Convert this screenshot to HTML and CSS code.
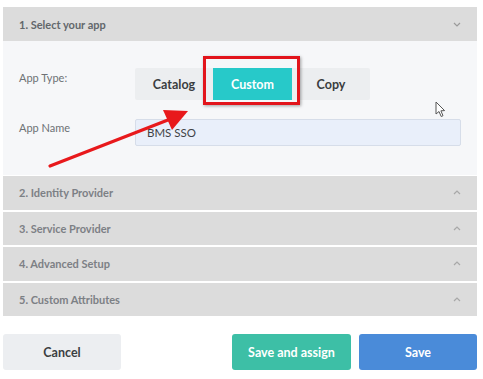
FILE: index.html
```html
<!DOCTYPE html>
<html lang="en">
<head>
    <meta charset="UTF-8">
    <meta name="viewport" content="width=device-width, initial-scale=1.0">
    <title>New App</title>
    <link rel="stylesheet" href="styles.css">
</head>
<body>
    <div class="page">
        <section class="panel">
            <div class="panel-header">
                <span>1. Select your app</span>
                <svg class="chevron" width="8" height="5" viewBox="0 0 8 5"><path d="M1 1 L4 4 L7 1" fill="none" stroke="#9a9a9a" stroke-width="1.2"/></svg>
            </div>
            <div class="panel-body">
                <div class="form-row">
                    <label class="form-label">App Type:</label>
                    <div class="segmented">
                        <button class="segment">Catalog</button>
                        <button class="segment active">Custom<span class="highlight"></span></button>
                        <button class="segment">Copy</button>
                    </div>
                </div>
                <div class="form-row row-name">
                    <label class="form-label">App Name</label>
                    <input class="text-input" type="text" value="BMS SSO">
                </div>
            </div>
        </section>

        <section class="panel collapsed">
            <div class="panel-header">
                <span>2. Identity Provider</span>
                <svg class="chevron" width="8" height="5" viewBox="0 0 8 5"><path d="M1 4 L4 1 L7 4" fill="none" stroke="#a8a8a8" stroke-width="1.2"/></svg>
            </div>
        </section>
        <section class="panel collapsed">
            <div class="panel-header">
                <span>3. Service Provider</span>
                <svg class="chevron" width="8" height="5" viewBox="0 0 8 5"><path d="M1 4 L4 1 L7 4" fill="none" stroke="#a8a8a8" stroke-width="1.2"/></svg>
            </div>
        </section>
        <section class="panel collapsed">
            <div class="panel-header">
                <span>4. Advanced Setup</span>
                <svg class="chevron" width="8" height="5" viewBox="0 0 8 5"><path d="M1 4 L4 1 L7 4" fill="none" stroke="#a8a8a8" stroke-width="1.2"/></svg>
            </div>
        </section>
        <section class="panel collapsed">
            <div class="panel-header">
                <span>5. Custom Attributes</span>
                <svg class="chevron" width="8" height="5" viewBox="0 0 8 5"><path d="M1 4 L4 1 L7 4" fill="none" stroke="#a8a8a8" stroke-width="1.2"/></svg>
            </div>
        </section>

        <footer class="actions">
            <button class="btn btn-cancel">Cancel</button>
            <div class="actions-right">
                <button class="btn btn-assign">Save and assign</button>
                <button class="btn btn-save">Save</button>
            </div>
        </footer>
    </div>

    <!-- annotation arrow -->
    <svg class="annotation-arrow" width="150" height="62" viewBox="0 0 150 62">
        <line x1="3" y1="59" x2="126" y2="11" stroke="#e8191c" stroke-width="3.2" stroke-linecap="round"/>
        <polygon points="141,4 116,3 125,23" fill="#e8191c"/>
    </svg>

    <!-- mouse pointer -->
    <svg class="cursor" width="11" height="17" viewBox="0 0 11 17">
        <path d="M1 1 L1 13 L4 10.5 L6.2 15.5 L8 14.7 L5.9 9.8 L9.6 9.6 Z" fill="#fff" stroke="#555" stroke-width="1" stroke-linejoin="round"/>
    </svg>
</body>
</html>
```

FILE: styles.css
```css
* {
    margin: 0;
    padding: 0;
    box-sizing: border-box;
    font-family: Lato, "Open Sans", sans-serif;
}

body {
    background-color: white;
    color: #444;
}

.page {
    width: 474px;
    margin-left: 3px;
    padding-top: 7px;
    display: flex;
    flex-direction: column;
    gap: 2px;
}

.panel-header {
    display: flex;
    justify-content: space-between;
    align-items: center;
    height: 34px;
    padding: 0 16px 0 16px;
    background-color: #dcdcdc;
    color: #6b6f73;
    font-size: 11px;
    font-weight: bold;
}

.panel.collapsed .panel-header {
    height: 33.5px;
    color: #7c8085;
}

.panel:first-child .panel-header {
    color: #62676b;
}

.panel-body {
    background-color: #f6f7f9;
    height: 134px;
    padding: 27px 16px 0 16px;
    margin-bottom: -1px;
}

.form-row {
    display: flex;
    align-items: flex-start;
}

.row-name {
    margin-top: 19px;
}

.form-label {
    width: 116px;
    padding-top: 3px;
    font-size: 11px;
    color: #6d7175;
}

.row-name .form-label {
    padding-top: 2px;
}

.segmented {
    display: flex;
    background-color: #eceef0;
    border-radius: 2px;
}

.segment {
    position: relative;
    width: 78px;
    height: 32px;
    border: none;
    background: transparent;
    font-size: 12.5px;
    font-weight: bold;
    color: #3a3d40;
}

.segment.active {
    width: 79px;
    background-color: #27c9c9;
    color: white;
}

.highlight {
    position: absolute;
    left: -10px;
    top: -12px;
    width: 97px;
    height: 49px;
    border: 3px solid #e2141b;
    box-shadow: 1px 1px 3px rgba(0, 0, 0, 0.35);
}

.text-input {
    width: 326px;
    height: 27px;
    padding: 0 11px;
    border: 1px solid #d6dde9;
    border-radius: 2px;
    background-color: #e9effa;
    font-size: 11.5px;
    color: #3f4246;
}

.actions {
    display: flex;
    justify-content: space-between;
    margin-top: 16px;
}

.actions-right {
    display: flex;
    gap: 8px;
}

.btn {
    height: 36px;
    width: 118px;
    border: none;
    border-radius: 3px;
    font-size: 12.5px;
    font-weight: bold;
}

.btn-cancel {
    background-color: #eceef1;
    color: #3b3e42;
}

.btn-assign {
    width: 119px;
    background-color: #3dbfa6;
    color: white;
}

.btn-save {
    background-color: #4a8bd9;
    color: white;
}

.annotation-arrow {
    position: absolute;
    left: 47px;
    top: 107px;
}

.cursor {
    position: absolute;
    left: 435px;
    top: 101px;
}
```
